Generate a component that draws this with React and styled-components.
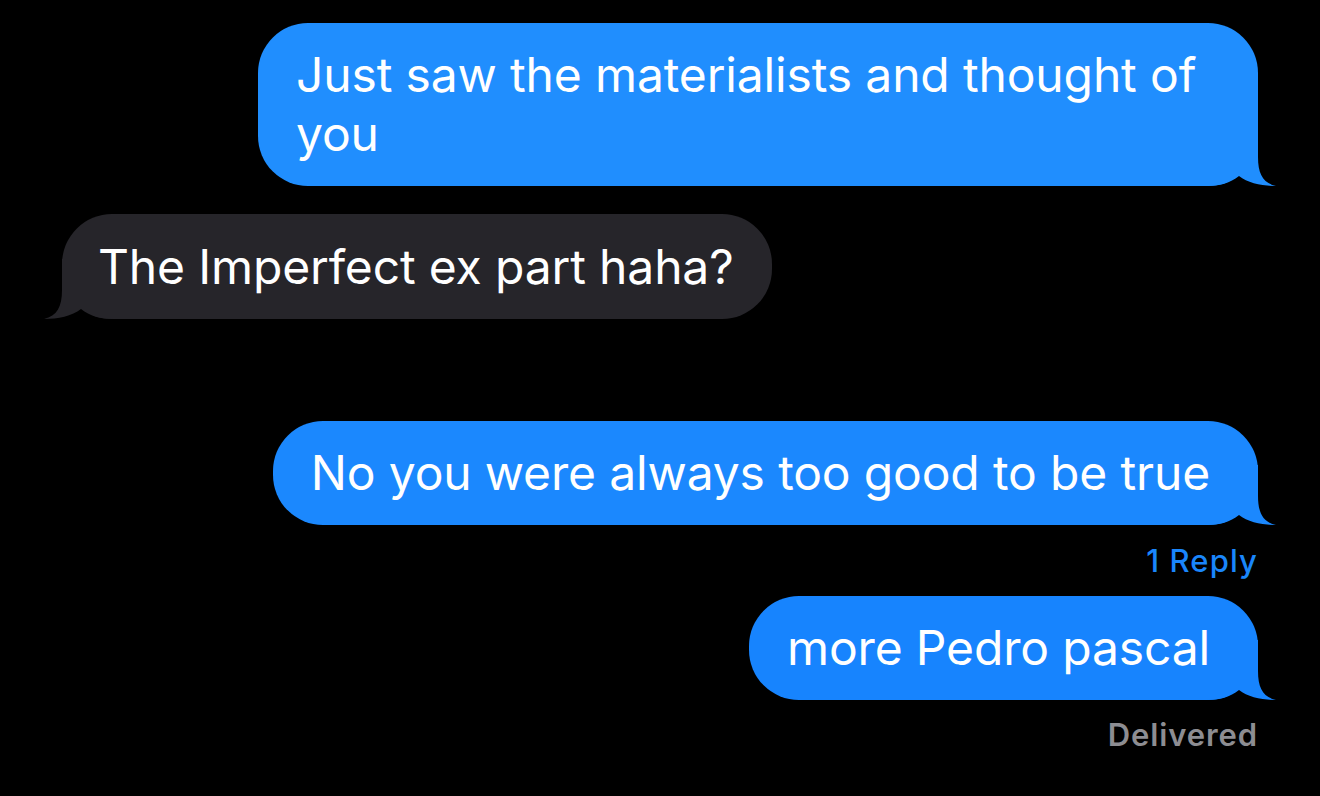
import React from 'react';
import styled, { createGlobalStyle } from 'styled-components';

const GlobalStyle = createGlobalStyle`
  html, body {
    margin: 0;
    background: #000;
  }
  body {
    font-family: Inter, "Noto Sans", "Liberation Sans", sans-serif;
    -webkit-font-smoothing: antialiased;
  }
`;

const messages = [
  { id: 1, from: 'me', text: 'Just saw the materialists and thought of you', color: '#208efe', gap: 23 },
  { id: 2, from: 'them', text: 'The Imperfect ex part haha?', gap: 28 },
  { id: 3, from: 'me', text: 'No you were always too good to be true', color: '#1b88fe', gap: 102, note: '1 Reply' },
  { id: 4, from: 'me', text: 'more Pedro pascal', color: '#1784fe', gap: 17, status: 'Delivered' },
];

const Tail = ({ color, flip }) => (
  <TailSvg viewBox="0 0 70 60" width="70" height="60" $flip={flip}>
    <path
      d="M52 0 L52 31 C52 48 57 57 70 60 C56 60 42 57 33 50 C24 57 14 60 0 60 L0 0 Z"
      fill={color}
    />
  </TailSvg>
);

const Bubble = ({ from, color, children }) => {
  const fill = from === 'me' ? color : '#26252a';
  return (
    <BubbleBox $from={from} $color={fill}>
      <Tail color={fill} flip={from !== 'me'} />
      <BubbleText>{children}</BubbleText>
    </BubbleBox>
  );
};

const App = () => (
  <>
    <GlobalStyle />
    <Thread>
      {messages.map((m) => (
        <Row key={m.id} $from={m.from} $gap={m.gap}>
          <Bubble from={m.from} color={m.color}>{m.text}</Bubble>
          {m.note && <ReplyNote>{m.note}</ReplyNote>}
          {m.status && <Status>{m.status}</Status>}
        </Row>
      ))}
    </Thread>
  </>
);

export default App;

const Thread = styled.div`
  display: flex;
  flex-direction: column;
  padding: 0 62px;
  width: 1320px;
  height: 796px;
  box-sizing: border-box;
  overflow: hidden;
`;

const Row = styled.div`
  display: flex;
  flex-direction: column;
  align-items: ${({ $from }) => ($from === 'me' ? 'flex-end' : 'flex-start')};
  margin-top: ${({ $gap }) => $gap}px;
`;

const BubbleBox = styled.div`
  position: relative;
  max-width: 1000px;
  box-sizing: border-box;
  padding: ${({ $from }) => ($from === 'me' ? '22px 48px 23px 38px' : '23px 38px 23px 36px')};
  border-radius: 50px;
  background: ${({ $color }) => $color};
  color: #fff;
  font-size: 48px;
  line-height: 59px;
  letter-spacing: -0.15px;
`;

const BubbleText = styled.span`
  position: relative;
  z-index: 1;
`;

const TailSvg = styled.svg`
  position: absolute;
  bottom: 0;
  z-index: 0;
  ${({ $flip }) => ($flip ? 'left: -18px; transform: scaleX(-1);' : 'right: -18px;')}
  display: block;
`;

const ReplyNote = styled.div`
  margin-top: 18px;
  color: #1a86fb;
  font-size: 31px;
  line-height: 36px;
  font-weight: 500;
  letter-spacing: 1.1px;
`;

const Status = styled.div`
  margin-top: 17px;
  color: #8d8d92;
  font-size: 31px;
  line-height: 36px;
  font-weight: 600;
  letter-spacing: 0.9px;
`;
